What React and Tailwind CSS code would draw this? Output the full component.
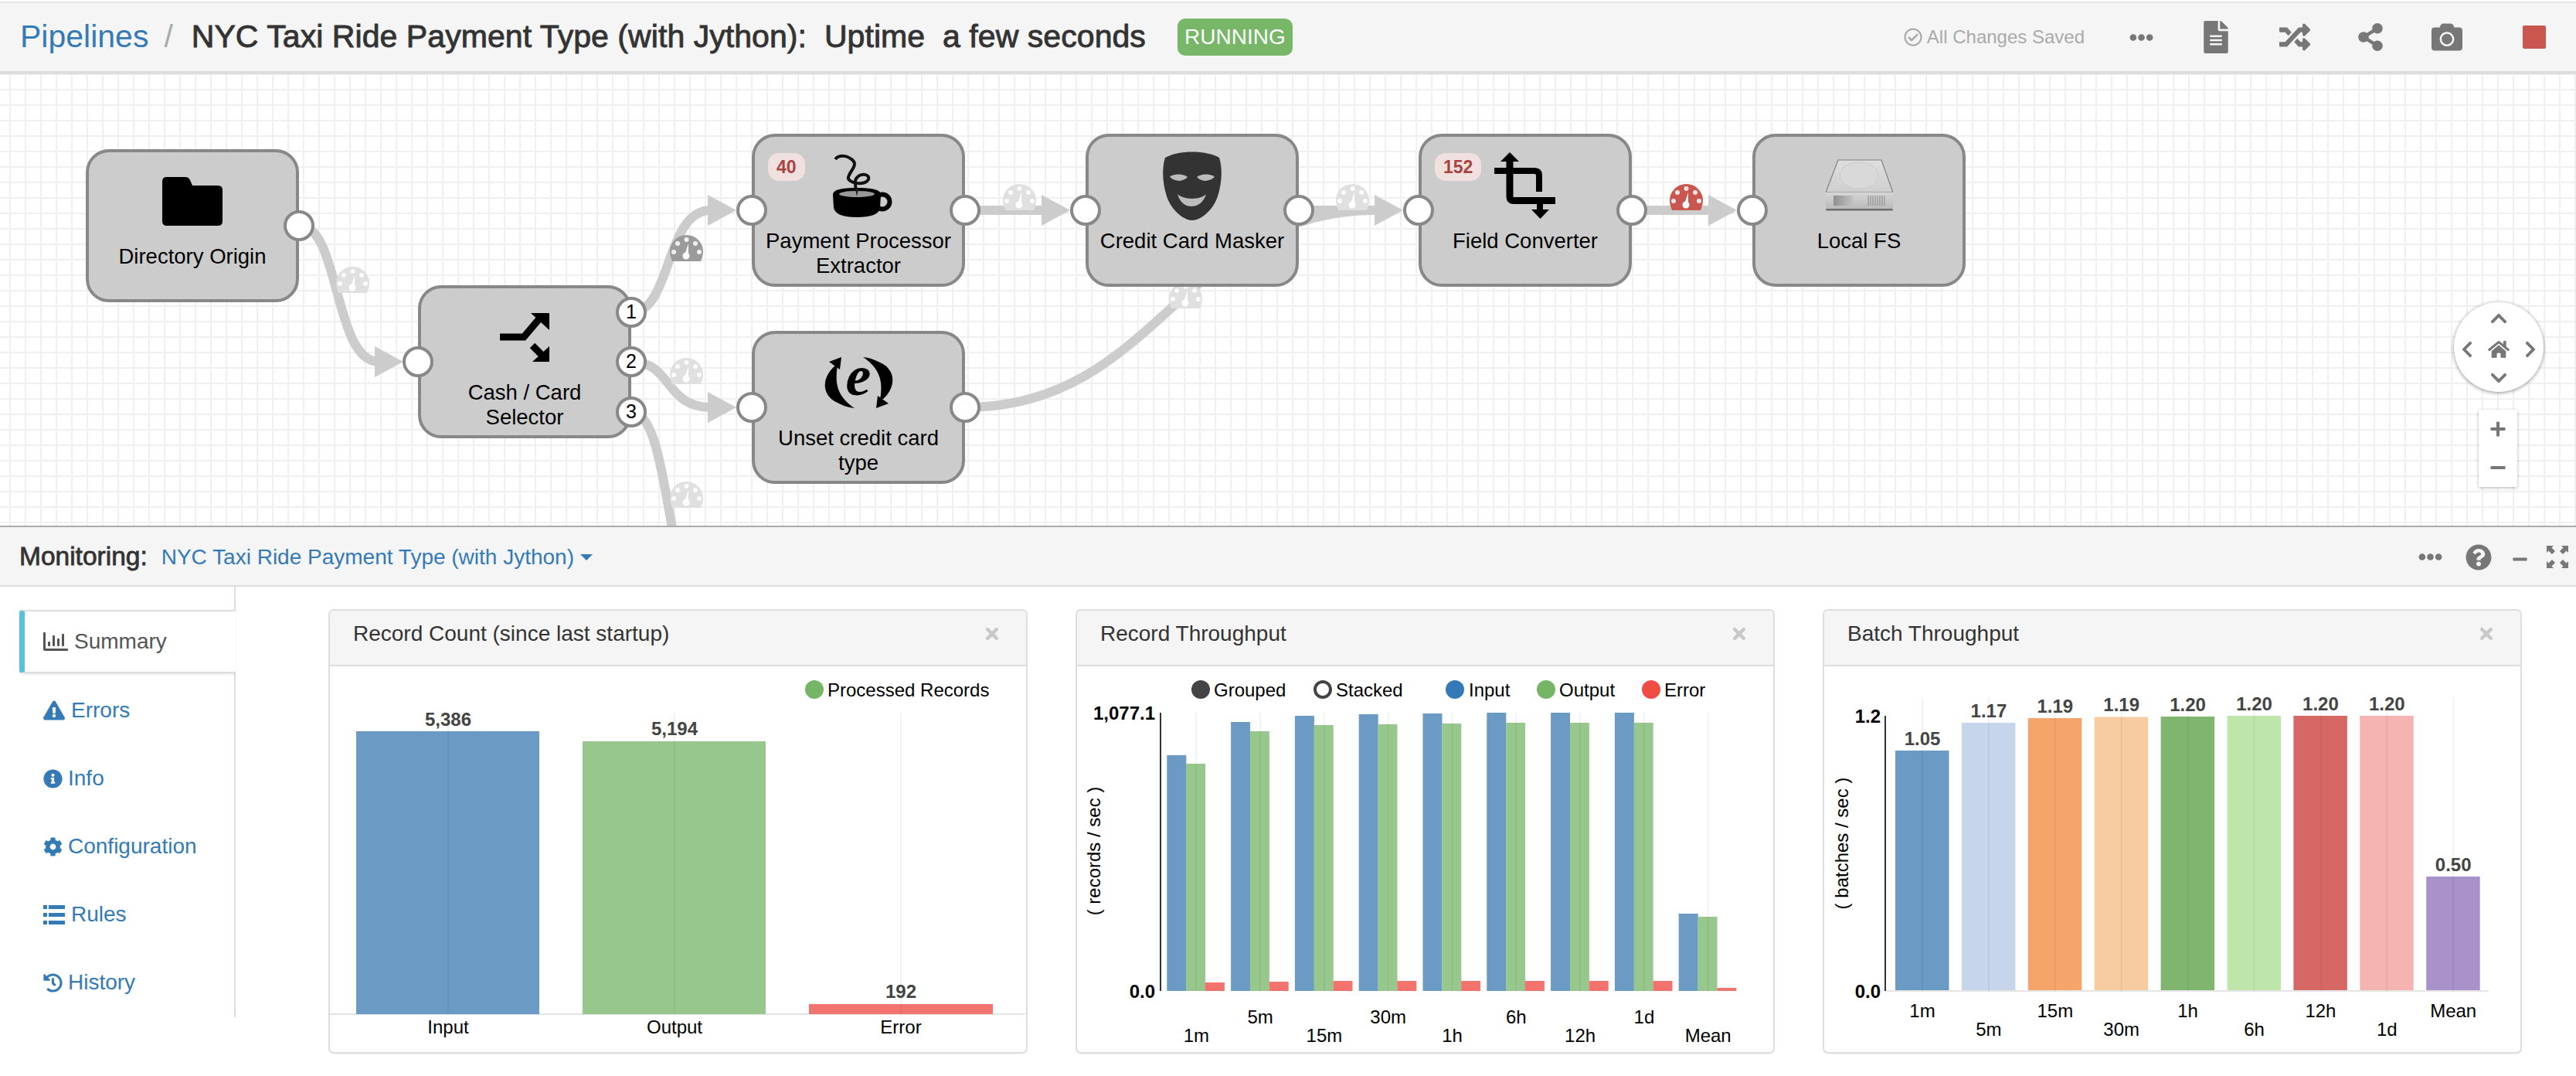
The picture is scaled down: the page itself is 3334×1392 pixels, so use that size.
import React from "react";
import {
  FaCamera,
  FaChevronDown,
  FaChevronLeft,
  FaChevronRight,
  FaChevronUp,
  FaCog,
  FaEllipsisH,
  FaExclamationTriangle,
  FaFileAlt,
  FaHistory,
  FaHome,
  FaInfoCircle,
  FaMinus,
  FaPlus,
  FaQuestionCircle,
  FaRandom,
  FaRegChartBar,
  FaRegCheckCircle,
  FaShareAlt,
  FaTimes,
} from "react-icons/fa";

const FolderIcon = () => (
  <svg width="78" height="63" viewBox="0 0 78 63">
    <path d="M5,0 H30 q4,0 6,4 l3,7 H72 q6,0 6,6 V57 q0,6 -6,6 H6 q-6,0 -6,-6 V6 q0,-6 5,-6Z" fill="#000" />
  </svg>
);

const SelectorIcon = () => (
  <svg width="64" height="63" viewBox="0 0 64 63">
    <path d="M0,31 H31 L53,5" fill="none" stroke="#000" strokeWidth="9" />
    <path d="M40,0 H64 V22 Z" fill="#000" />
    <path d="M42,42 L58,58" fill="none" stroke="#000" strokeWidth="9" />
    <path d="M64,43 V63 H42 Z" fill="#000" />
  </svg>
);

const CoffeeIcon = () => (
  <svg width="77" height="82" viewBox="0 0 77 82" className="ml-[10px]">
    <path
      d="M3,7 C8,1 18,2 24,7 C34,14 22,22 20,30 C18,38 42,42 46,33 C48,26 36,24 30,32 C27,38 30,44 31,52"
      fill="none"
      stroke="#111"
      strokeWidth="4"
    />
    <circle cx="64" cy="62" r="9.5" fill="none" stroke="#000" strokeWidth="6" />
    <path d="M0,53 C0,46 12,44 31,44 C50,44 62,46 62,53 L61,70 C60,78 50,82 31,82 C12,82 3,78 1,70 Z" fill="#000" />
    <ellipse cx="31" cy="52" rx="23" ry="4" fill="#999" />
    <path d="M29,46 L33,46 L31,55Z" fill="#222" />
  </svg>
);

const MaskIcon = () => (
  <svg width="78" height="89" viewBox="0 0 78 89">
    <path d="M4,8 C20,-2 58,-2 74,8 C78,20 78,40 72,58 C66,76 50,89 39,89 C28,89 12,76 6,58 C0,40 0,20 4,8 Z" fill="#333" />
    <path d="M10,33 C16,28 28,29 33,33 C28,39 18,40 10,33 Z" fill="#bbb" />
    <path d="M45,33 C50,29 62,28 68,33 C60,40 50,39 45,33 Z" fill="#bbb" />
    <path d="M20,55 C28,63 50,63 57,55 C54,66 46,71 38,71 C30,71 23,66 20,55 Z" fill="#bbb" />
  </svg>
);

const ExpressionIcon = () => (
  <div className="relative w-[95px] h-[66px]">
    <svg width="95" height="66" viewBox="0 0 95 66">
      <path d="M21,8 C3,20 -3,42 13,55 C22,61 32,65 42,66 C30,58 21,48 19,33 C18,24 19,14 21,8 Z" fill="#000" />
      <path d="M9,6 L25,0 L23,16 Z" fill="#000" />
      <g transform="rotate(180 47.5 33)">
        <path d="M21,8 C3,20 -3,42 13,55 C22,61 32,65 42,66 C30,58 21,48 19,33 C18,24 19,14 21,8 Z" fill="#000" />
        <path d="M9,6 L25,0 L23,16 Z" fill="#000" />
      </g>
    </svg>
    <span className="absolute inset-x-0 top-[-9px] text-center text-[74px] leading-[66px] font-bold italic text-black font-['Liberation_Serif',serif]">
      e
    </span>
  </div>
);

const CropIcon = () => (
  <svg width="80" height="86" viewBox="0 0 80 86">
    <path d="M20,0 L32,12 H8 Z" fill="#000" />
    <path d="M20,10 V58 Q20,62.5 25,62.5 H79" fill="none" stroke="#000" strokeWidth="9" />
    <path d="M0,24 H52 Q58,24 58,30 V51" fill="none" stroke="#000" strokeWidth="8" />
    <rect x="55" y="66" width="8" height="10" fill="#000" />
    <path d="M48,74 H71 L59.5,86 Z" fill="#000" />
  </svg>
);

const DriveIcon = () => (
  <svg width="87" height="68" viewBox="0 0 87 68">
    <defs>
      <linearGradient id="driveTop" x1="0" y1="0" x2="0" y2="1">
        <stop offset="0" stopColor="#dedede" />
        <stop offset="1" stopColor="#cfcfcf" />
      </linearGradient>
      <linearGradient id="driveFront" x1="0" y1="0" x2="0" y2="1">
        <stop offset="0" stopColor="#d6d6d6" />
        <stop offset="1" stopColor="#b8b8b8" />
      </linearGradient>
      <linearGradient id="driveSlot" x1="0" y1="0" x2="1" y2="0">
        <stop offset="0" stopColor="#8f8f8f" />
        <stop offset="1" stopColor="#c4c4c4" />
      </linearGradient>
    </defs>
    <path d="M16,1 H72 L87,43 H0 Z" fill="url(#driveTop)" stroke="#808080" strokeWidth="1.2" />
    <ellipse cx="43" cy="21" rx="25" ry="17" fill="#d9d9d9" stroke="#cbcbcb" />
    <path d="M0,43 H87 V62 Q87,65 84,65 H3 Q0,65 0,62 Z" fill="url(#driveFront)" />
    <rect x="10" y="47" width="26" height="13" fill="url(#driveSlot)" />
    <path d="M55,47 V60 M58,47 V60 M61,47 V60 M64,47 V60 M67,47 V60 M70,47 V60 M73,47 V60 M76,47 V60" stroke="#939393" strokeWidth="1.2" />
    <rect x="0" y="64" width="87" height="2.5" rx="1.2" fill="#6e6e6e" />
  </svg>
);

const ListIcon = () => (
  <svg width="28" height="25" viewBox="0 0 28 25" fill="#337ab7">
    <path d="M0,0 H5 V5 H0Z M7,0 H28 V5 H7Z M0,10 H5 V15 H0Z M7,10 H28 V15 H7Z M0,20 H5 V25 H0Z M7,20 H28 V25 H7Z" />
  </svg>
);

const nodes = [
  { cls: "left-[111px] top-[97px]", label: ["Directory Origin"], icon: <FolderIcon />, input: false, outputs: ["top-[75px]"] },
  { cls: "left-[541px] top-[273px]", label: ["Cash / Card", "Selector"], icon: <SelectorIcon />, input: true, numbered: true, outputs: ["top-[11px]", "top-[75px]", "top-[140px]"] },
  { cls: "left-[973px] top-[77px]", label: ["Payment Processor", "Extractor"], icon: <CoffeeIcon />, input: true, outputs: ["top-[75px]"], badge: "40" },
  { cls: "left-[973px] top-[332px]", label: ["Unset credit card", "type"], icon: <ExpressionIcon />, input: true, outputs: ["top-[75px]"] },
  { cls: "left-[1405px] top-[77px]", label: ["Credit Card Masker"], icon: <MaskIcon />, input: true, outputs: ["top-[75px]"] },
  { cls: "left-[1836px] top-[77px]", label: ["Field Converter"], icon: <CropIcon />, input: true, outputs: ["top-[75px]"], badge: "152" },
  { cls: "left-[2268px] top-[77px]", label: ["Local FS"], icon: <DriveIcon />, input: true, outputs: [] },
];

const StageNode = ({ node }) => (
  <div className={`absolute ${node.cls} w-[276px] h-[198px] rounded-[30px] border-4 border-[#888] bg-[#ccc]`}>
    <div className="h-[119px] pt-[7px] flex items-center justify-center">{node.icon}</div>
    <div className="text-center text-[27.5px] leading-[32px] text-black">
      {node.label.map((line) => (
        <div key={line}>{line}</div>
      ))}
    </div>
    {node.badge && (
      <div className="absolute left-[17px] top-[21px] h-[36px] px-[11px] rounded-[14px] bg-[#f0e1e0] text-[#a94442] text-[23px] font-bold leading-[36px]">
        {node.badge}
      </div>
    )}
    {node.input && (
      <div className="absolute left-[-24px] top-[75px] w-[40px] h-[40px] rounded-full border-4 border-[#888] bg-white" />
    )}
    {node.outputs.map((top, i) => (
      <div
        key={top}
        className={`absolute right-[-24px] ${top} w-[40px] h-[40px] rounded-full border-4 border-[#888] bg-white flex items-center justify-center text-[25px] text-black`}
      >
        {node.numbered ? i + 1 : ""}
      </div>
    ))}
  </div>
);

const Gauge = ({ x, y, color }) => (
  <g transform={`translate(${x} ${y})`}>
    <path d="M3,34 C1,29 0,25 0,21 A21.5,21 0 0 1 43,21 C43,25 42,29 40,34 Z" fill={color} />
    <circle cx="21.5" cy="6" r="3" fill="#fff" opacity="0.85" />
    <circle cx="10" cy="11" r="3" fill="#fff" opacity="0.85" />
    <circle cx="33" cy="11" r="3" fill="#fff" opacity="0.85" />
    <circle cx="5" cy="22" r="3" fill="#fff" opacity="0.85" />
    <circle cx="38" cy="22" r="3" fill="#fff" opacity="0.85" />
    <circle cx="21" cy="27" r="4.5" fill="#fff" />
    <path d="M19,26 L24,11 L24,27 Z" fill="#fff" />
  </g>
);

const Arrow = ({ tip, y }) => <polygon points={`${tip - 37},${y - 20} ${tip},${y} ${tip - 37},${y + 20}`} fill="#ccc" />;

const edgePaths = [
  "M387,291 C440,291 432,468 490,468",
  "M817,404 C870,404 860,272 920,272",
  "M817,468 C870,468 860,527 920,527",
  "M817,533 C870,533 860,780 915,780",
  "M1249,527 C1500,527 1530,272 1780,272",
  "M1249,272 H1350",
  "M1681,272 H1780",
  "M2112,272 H2212",
];

const Canvas = () => (
  <div className="relative h-[586px] overflow-hidden border-b-2 border-[#aaa] bg-white bg-[linear-gradient(#f0f0f0_2px,transparent_2px),linear-gradient(90deg,#f0f0f0_2px,transparent_2px)] bg-[size:20px_20px] bg-[position:12px_-1px]">
    <svg className="absolute left-0 top-0" width="3334" height="586" viewBox="0 96 3334 586">
      {edgePaths.map((d) => (
        <path key={d} d={d} fill="none" stroke="#ccc" strokeWidth="12" />
      ))}
      <Arrow tip={522} y={468} />
      <Arrow tip={953} y={272} />
      <Arrow tip={953} y={527} />
      <Arrow tip={1385} y={272} />
      <Arrow tip={1816} y={272} />
      <Arrow tip={2248} y={272} />
      <Gauge x={435} y={345} color="#e0e0e0" />
      <Gauge x={867} y={304} color="#9b9b9b" />
      <Gauge x={867} y={463} color="#e0e0e0" />
      <Gauge x={867} y={623} color="#e0e0e0" />
      <Gauge x={1298} y={238} color="#e0e0e0" />
      <Gauge x={1513} y={365} color="#e0e0e0" />
      <Gauge x={1729} y={238} color="#e0e0e0" />
      <Gauge x={2161} y={238} color="#c9574f" />
    </svg>
    {nodes.map((node) => (
      <StageNode key={node.label[0]} node={node} />
    ))}
    <div className="absolute left-[3176px] top-[295px] w-[116px] h-[116px] rounded-full bg-white shadow-[0_1px_5px_rgba(0,0,0,0.45)] text-[#777] grid grid-cols-[34px_48px_34px] grid-rows-[42px_38px_36px] place-items-center">
      <span />
      <FaChevronUp size={24} />
      <span />
      <FaChevronLeft size={24} />
      <FaHome size={28} />
      <FaChevronRight size={24} />
      <span />
      <FaChevronDown size={24} />
      <span />
    </div>
    <div className="absolute left-[3208px] top-[434px] w-[50px] h-[100px] bg-white shadow-[0_1px_4px_rgba(0,0,0,0.3)] text-[#777] flex flex-col items-center justify-around">
      <FaPlus size={22} />
      <FaMinus size={22} />
    </div>
  </div>
);

const Header = () => (
  <div className="mt-[2px] h-[94px] border-t-2 border-b-4 border-t-[#e6e6e6] border-b-[#ddd] bg-[#f5f5f5] flex items-center pl-[26px] pr-[39px]">
    <span className="text-[41px] text-[#337ab7]">Pipelines</span>
    <span className="text-[41px] text-[#aaa] ml-[20px]">/</span>
    <span className="text-[41px] tracking-[0.06px] text-[#333] ml-[24px] whitespace-pre [-webkit-text-stroke:0.9px_#333]">
      NYC Taxi Ride Payment Type (with Jython):  Uptime  a few seconds
    </span>
    <span className="ml-[41px] w-[149px] h-[48px] rounded-[10px] bg-[#77b767] text-white text-[28px] leading-[48px] text-center">
      RUNNING
    </span>
    <div className="ml-auto flex items-center text-[#777]">
      <FaRegCheckCircle size={24} className="text-[#aaa]" />
      <span className="ml-[6px] text-[24px] text-[#aaa]">All Changes Saved</span>
      <FaEllipsisH size={31} className="ml-[58px]" />
      <FaFileAlt size={42} className="ml-[60px]" />
      <FaRandom size={40} className="ml-[61px]" />
      <FaShareAlt size={36} className="ml-[60px]" />
      <FaCamera size={40} className="ml-[61px]" />
      <div className="ml-[78px] w-[30px] h-[30px] rounded-[2px] bg-[#c9574f]" />
    </div>
  </div>
);

const ExpandIcon = () => (
  <svg width="28" height="29" viewBox="0 0 28 29" fill="#777">
    <path d="M0,0 H9 L6.5,2.5 L11,7 L7,11 L2.5,6.5 L0,9 Z" />
    <path d="M28,0 H19 L21.5,2.5 L17,7 L21,11 L25.5,6.5 L28,9 Z" />
    <path d="M0,29 H9 L6.5,26.5 L11,22 L7,18 L2.5,22.5 L0,20 Z" />
    <path d="M28,29 H19 L21.5,26.5 L17,22 L21,18 L25.5,22.5 L28,20 Z" />
  </svg>
);

const MonitorBar = () => (
  <div className="h-[77px] pt-[2px] border-b-2 border-[#ddd] bg-[#f5f5f5] flex items-center pl-[25px] pr-[10px]">
    <span className="text-[33.5px] text-[#333] [-webkit-text-stroke:0.8px_#333]">Monitoring:</span>
    <span className="ml-[18px] text-[28px] text-[#337ab7]">NYC Taxi Ride Payment Type (with Jython)</span>
    <span className="ml-[8px] w-0 h-0 border-x-[8px] border-t-[8px] border-x-transparent border-t-[#337ab7]" />
    <div className="ml-auto flex items-center text-[#777]">
      <FaEllipsisH size={31} />
      <FaQuestionCircle size={34} className="ml-[30px]" />
      <FaMinus size={21} className="ml-[26px] mt-[6px]" />
      <div className="ml-[24px]">
        <ExpandIcon />
      </div>
    </div>
  </div>
);

const sideItems = [
  { label: "Errors", icon: <FaExclamationTriangle size={28} />, gap: "ml-[8px]" },
  { label: "Info", icon: <FaInfoCircle size={25} />, gap: "ml-[7px]" },
  { label: "Configuration", icon: <FaCog size={25} />, gap: "ml-[7px]" },
  { label: "Rules", icon: <ListIcon />, gap: "ml-[8px]" },
  { label: "History", icon: <FaHistory size={25} />, gap: "ml-[7px]" },
];

const Sidebar = () => (
  <div className="w-[305px] h-[557px] pt-[30px] border-r-2 border-[#ddd] shrink-0">
    <div className="ml-[25px] -mr-[2px] h-[82px] mb-[4px] pl-[31px] flex items-center rounded-l-[4px] border-y-2 border-[#ddd] border-l-[7px] border-l-[#5bc0de] bg-white shadow-[0_2px_3px_rgba(0,0,0,0.08)] text-[28px] text-[#555]">
      <FaRegChartBar size={32} className="-ml-[7px]" />
      <span className="ml-[8px]">Summary</span>
    </div>
    {sideItems.map((item) => (
      <div key={item.label} className="h-[88px] pl-[56px] flex items-center text-[28px] text-[#337ab7]">
        {item.icon}
        <span className={item.gap}>{item.label}</span>
      </div>
    ))}
  </div>
);

const Panel = ({ title, viewBox, children }) => (
  <div className="w-[905px] h-[575px] rounded-[7px] border-2 border-[#ddd] shadow-[0_1px_1px_rgba(0,0,0,0.05)] overflow-hidden shrink-0">
    <div className="h-[72px] pb-[10px] pl-[30px] pr-[32px] border-b-2 border-[#ddd] bg-[#f5f5f5] flex items-center justify-between">
      <span className="text-[28px] text-[#333]">{title}</span>
      <FaTimes size={24} className="text-[#c8c8c8]" />
    </div>
    <svg className="block" width="901" height="499" viewBox={viewBox}>
      {children}
    </svg>
  </div>
);

const BLUE = "#6b9ac4";
const GREEN = "#98c78e";
const RED = "#f3746f";

const Guide = ({ x, top, bottom }) => (
  <line x1={x} x2={x} y1={top} y2={bottom} stroke="#000" strokeOpacity="0.05" strokeWidth="2" />
);

const Dot = ({ x, fill, ring }) =>
  ring ? (
    <circle cx={x} cy="892" r="10" fill="#fff" stroke="#444" strokeWidth="4" />
  ) : (
    <circle cx={x} cy="892" r="12" fill={fill} />
  );

const Label = ({ x, y, children }) => (
  <text x={x} y={y} textAnchor="middle" dominantBaseline="central" className="text-[24px] fill-black">
    {children}
  </text>
);

const Value = ({ x, y, anchor = "middle", fill = "fill-[#444]", children }) => (
  <text x={x} y={y} textAnchor={anchor} dominantBaseline="central" className={`text-[24px] font-bold ${fill}`}>
    {children}
  </text>
);

const AxisTitle = ({ x, y, children }) => (
  <text
    x={x}
    y={y}
    transform={`rotate(-90 ${x} ${y})`}
    textAnchor="middle"
    dominantBaseline="central"
    className="text-[24px] fill-black"
  >
    {children}
  </text>
);

const countBars = [
  { label: "Input", value: "5,386", x: 461, w: 237, top: 946, fill: BLUE, center: 580, valueY: 930 },
  { label: "Output", value: "5,194", x: 754, w: 237, top: 959, fill: GREEN, center: 873, valueY: 942 },
  { label: "Error", value: "192", x: 1047, w: 238, top: 1299, fill: RED, center: 1166, valueY: 1282 },
];

const RecordCount = () => (
  <Panel title="Record Count (since last startup)" viewBox="427 862 901 499">
    <line x1="427" x2="1327" y1="1312" y2="1312" stroke="#e5e5e5" strokeWidth="2" />
    {countBars.map((b) => (
      <rect key={b.label} x={b.x} y={b.top} width={b.w} height={1312 - b.top} fill={b.fill} />
    ))}
    {countBars.map((b) => (
      <Guide key={b.label} x={b.center} top={922} bottom={1312} />
    ))}
    {countBars.map((b) => (
      <Value key={b.label} x={b.center} y={b.valueY}>
        {b.value}
      </Value>
    ))}
    {countBars.map((b) => (
      <Label key={b.label} x={b.center} y={1328}>
        {b.label}
      </Label>
    ))}
    <Dot x={1054} fill="#74b566" />
    <text x="1071" y="892" dominantBaseline="central" className="text-[24px] fill-black">
      Processed Records
    </text>
  </Panel>
);

const throughput = [
  { label: "1m", tops: [977, 988, 1271], y: 1339 },
  { label: "5m", tops: [934, 946, 1270], y: 1315 },
  { label: "15m", tops: [926, 938, 1269], y: 1339 },
  { label: "30m", tops: [924, 937, 1269], y: 1315 },
  { label: "1h", tops: [923, 936, 1269], y: 1339 },
  { label: "6h", tops: [922, 935, 1269], y: 1315 },
  { label: "12h", tops: [922, 935, 1269], y: 1339 },
  { label: "1d", tops: [922, 935, 1269], y: 1315 },
  { label: "Mean", tops: [1182, 1186, 1278], y: 1339 },
];

const legend = [
  { name: "Grouped", dot: 1554, text: 1571, fill: "#444" },
  { name: "Stacked", dot: 1712, text: 1729, ring: true },
  { name: "Input", dot: 1883, text: 1901, fill: "#337ab7" },
  { name: "Output", dot: 2001, text: 2018, fill: "#74b566" },
  { name: "Error", dot: 2137, text: 2154, fill: "#ef4c43" },
];

const RecordThroughput = () => (
  <Panel title="Record Throughput" viewBox="1394 862 901 499">
    {throughput.map((g, i) => {
      const x = 1510.3 + 82.8 * i;
      return (
        <g key={g.label}>
          <rect x={x} y={g.tops[0]} width="25" height={1282 - g.tops[0]} fill={BLUE} />
          <rect x={x + 24.8} y={g.tops[1]} width="25" height={1282 - g.tops[1]} fill={GREEN} />
          <rect x={x + 49.6} y={g.tops[2]} width="25" height={1282 - g.tops[2]} fill={RED} />
          <Guide x={x + 38} top={922} bottom={1282} />
          <Label x={x + 38} y={g.y}>
            {g.label}
          </Label>
        </g>
      );
    })}
    <line x1="1502" x2="1502" y1="922" y2="1282" stroke="#333" strokeWidth="2" />
    <Value x={1495} y={922} anchor="end" fill="fill-black">
      1,077.1
    </Value>
    <Value x={1495} y={1282} anchor="end" fill="fill-black">
      0.0
    </Value>
    <AxisTitle x={1415} y={1101}>
      ( records / sec )
    </AxisTitle>
    {legend.map((l) => (
      <g key={l.name}>
        <Dot x={l.dot} fill={l.fill} ring={l.ring} />
        <text x={l.text} y="892" dominantBaseline="central" className="text-[24px] fill-black">
          {l.name}
        </text>
      </g>
    ))}
  </Panel>
);

const batches = [
  { label: "1m", value: "1.05", top: 971, fill: BLUE, y: 1307 },
  { label: "5m", value: "1.17", top: 935, fill: "#c6d5ec", y: 1331 },
  { label: "15m", value: "1.19", top: 929, fill: "#f5a56a", y: 1307 },
  { label: "30m", value: "1.19", top: 927.5, fill: "#f7cca0", y: 1331 },
  { label: "1h", value: "1.20", top: 927, fill: "#7fb56f", y: 1307 },
  { label: "6h", value: "1.20", top: 926, fill: "#bfe6aa", y: 1331 },
  { label: "12h", value: "1.20", top: 926, fill: "#d56864", y: 1307 },
  { label: "1d", value: "1.20", top: 926, fill: "#f5b3b2", y: 1331 },
  { label: "Mean", value: "0.50", top: 1134, fill: "#a991c9", y: 1307 },
];

const BatchThroughput = () => (
  <Panel title="Batch Throughput" viewBox="2361 862 901 499">
    <line x1="2440" x2="3221" y1="1282" y2="1282" stroke="#e5e5e5" strokeWidth="2" />
    {batches.map((b, i) => {
      const x = 2453 + 85.9 * i;
      return (
        <g key={b.label}>
          <rect x={x} y={b.top} width="69.5" height={1281 - b.top} fill={b.fill} />
          <Guide x={x + 35} top={902} bottom={1282} />
          <Value x={x + 35} y={b.top - 16}>
            {b.value}
          </Value>
          <Label x={x + 35} y={b.y}>
            {b.label}
          </Label>
        </g>
      );
    })}
    <line x1="2440" x2="2440" y1="926" y2="1282" stroke="#333" strokeWidth="2" />
    <Value x={2434} y={926} anchor="end" fill="fill-black">
      1.2
    </Value>
    <Value x={2434} y={1282} anchor="end" fill="fill-black">
      0.0
    </Value>
    <AxisTitle x={2383} y={1091}>
      ( batches / sec )
    </AxisTitle>
  </Panel>
);

const App = () => {
  return (
    <div className="w-[3334px] h-[1392px] overflow-hidden bg-white font-['Liberation_Sans',Arial,sans-serif]">
      <Header />
      <Canvas />
      <MonitorBar />
      <div className="flex">
        <Sidebar />
        <div className="ml-[120px] mt-[29px] flex gap-[62px]">
          <RecordCount />
          <RecordThroughput />
          <BatchThroughput />
        </div>
      </div>
    </div>
  );
};

export default App;
